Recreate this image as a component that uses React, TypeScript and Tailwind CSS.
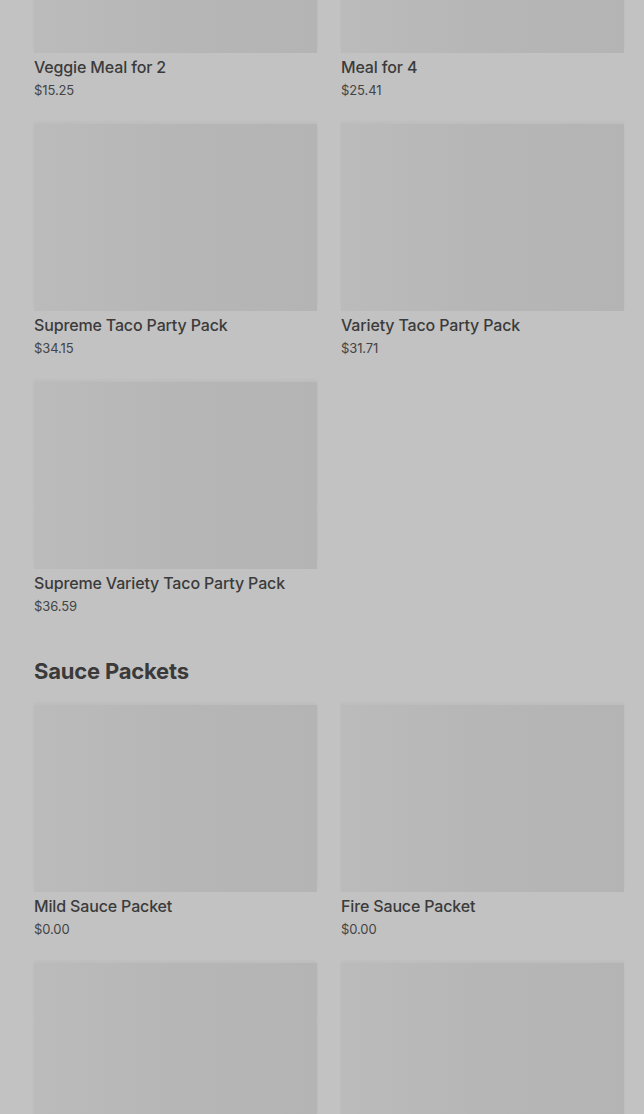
import React from "react";

type Item = { name: string; price: string };

const combos: Item[] = [
  { name: "Veggie Meal for 2", price: "$15.25" },
  { name: "Meal for 4", price: "$25.41" },
  { name: "Supreme Taco Party Pack", price: "$34.15" },
  { name: "Variety Taco Party Pack", price: "$31.71" },
  { name: "Supreme Variety Taco Party Pack", price: "$36.59" },
];

const sauces: Item[] = [
  { name: "Mild Sauce Packet", price: "$0.00" },
  { name: "Fire Sauce Packet", price: "$0.00" },
];

function Card({ item }: { item?: Item }) {
  return (
    <div className="flex flex-col">
      <div className="h-[187px] w-full bg-linear-to-r from-[#bbbbbb] via-[#b6b6b6] to-[#b4b4b4] shadow-[0_-2px_3px_rgba(0,0,0,0.03)]" />
      {item && (
        <>
          <div className="mt-[4px] text-[16px] leading-[20px] font-medium text-[#3b3b3b] tracking-[-0.15px]">
            {item.name}
          </div>
          <div className="mt-[4px] text-[13px] leading-[18px] text-[#444444] tracking-[-0.1px]">
            {item.price}
          </div>
        </>
      )}
    </div>
  );
}

export default function App() {
  return (
    <div
      className="h-[1114px] w-[644px] overflow-hidden bg-[#c2c2c2]"
      style={{ fontFamily: "Inter, 'Noto Sans', sans-serif" }}
    >
      <div className="mt-[-134px] pl-[34px] pr-[20px]">
        <div className="grid grid-cols-[283px_283px] gap-x-[24px] gap-y-[25px]">
          {combos.map((c) => (
            <Card key={c.name} item={c} />
          ))}
        </div>
        <h2 className="mt-[42px] mb-[20px] text-[22px] leading-[28px] font-bold text-[#3a3a3a] tracking-[-0.2px]">
          Sauce Packets
        </h2>
        <div className="grid grid-cols-[283px_283px] gap-x-[24px] gap-y-[25px]">
          {sauces.map((c) => (
            <Card key={c.name} item={c} />
          ))}
          <Card />
          <Card />
        </div>
      </div>
    </div>
  );
}
